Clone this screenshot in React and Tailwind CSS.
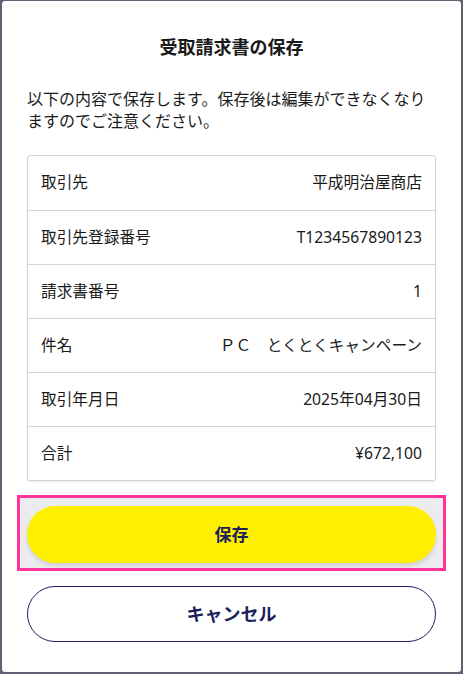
import React from "react";

const rows = [
   { label: "取引先", value: "平成明治屋商店" },
   { label: "取引先登録番号", value: "T1234567890123" },
   { label: "請求書番号", value: "1" },
   { label: "件名", value: "ＰＣ　とくとくキャンペーン" },
   { label: "取引年月日", value: "2025年04月30日" },
   { label: "合計", value: "¥672,100" },
];

function App() {
   return (
      <div
         className="w-[463px] h-[674px] bg-[#5f6371] px-[2px] pt-[1px] pb-[2px]"
         style={{ fontFamily: '"Noto Sans", "Noto Sans CJK JP", sans-serif' }}
      >
         {/* Modal */}
         <div className="bg-white rounded-[3px] h-full px-[25px] pt-[33px] flex flex-col text-[#1a1a1a]">
            <h2 className="text-[18px] leading-[26px] font-bold text-center">受取請求書の保存</h2>

            <p className="mt-[28px] text-[16px] leading-[22px]">
               以下の内容で保存します。保存後は編集ができなくなりますのでご注意ください。
            </p>

            {/* Summary table */}
            <div className="mt-[23px] border border-[#d4d4d4] rounded-[3px] shadow-[0_1px_2px_rgba(0,0,0,0.08)]">
               {rows.map((row, i) => (
                  <div
                     key={row.label}
                     className={`h-[54px] px-[13px] flex items-center justify-between text-[15.7px] ${i > 0 ? "border-t border-[#d4d4d4]" : ""}`}
                  >
                     <span>{row.label}</span>
                     <span>{row.value}</span>
                  </div>
               ))}
            </div>

            {/* Save button (focused) */}
            <div className="mt-[14px] -mx-[10px] border-[3px] border-[#ff3399] bg-[#ececee] pt-[8px] pb-[5px] px-[7px]">
               <button className="w-full h-[57px] rounded-full bg-[#fff000] text-[#1c1f5c] text-[17px] font-bold shadow-[0_3px_4px_rgba(0,0,0,0.12)]">
                  保存
               </button>
            </div>

            <button className="mt-[15px] h-[56px] w-full rounded-full border border-[#1c1f5c] bg-white text-[#1c1f5c] text-[18px] font-bold">
               キャンセル
            </button>
         </div>
      </div>
   );
}

export default App;
